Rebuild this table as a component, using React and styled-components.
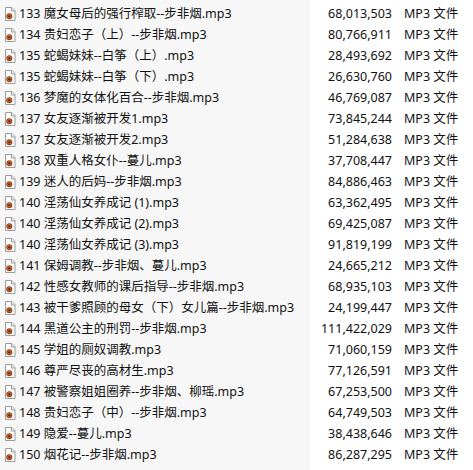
import React from 'react'
import styled, { createGlobalStyle } from 'styled-components'

const GlobalStyle = createGlobalStyle`
  html, body {
    margin: 0;
    padding: 0;
    background: #fff;
  }
  body {
    font-family: "Noto Sans", "Noto Sans CJK SC", sans-serif;
    color: #111;
  }
`

const files = [
    ['133 魔女母后的强行榨取--步非烟.mp3', '68,013,503'],
    ['134 贵妇恋子（上）--步非烟.mp3', '80,766,911'],
    ['135 蛇蝎妹妹--白筝（上）.mp3', '28,493,692'],
    ['135 蛇蝎妹妹--白筝（下）.mp3', '26,630,760'],
    ['136 梦魔的女体化百合--步非烟.mp3', '46,769,087'],
    ['137 女友逐渐被开发1.mp3', '73,845,244'],
    ['137 女友逐渐被开发2.mp3', '51,284,638'],
    ['138 双重人格女仆--蔓儿.mp3', '37,708,447'],
    ['139 迷人的后妈--步非烟.mp3', '84,886,463'],
    ['140 淫荡仙女养成记 (1).mp3', '63,362,495'],
    ['140 淫荡仙女养成记 (2).mp3', '69,425,087'],
    ['140 淫荡仙女养成记 (3).mp3', '91,819,199'],
    ['141 保姆调教--步非烟、蔓儿.mp3', '24,665,212'],
    ['142 性感女教师的课后指导--步非烟.mp3', '68,935,103'],
    ['143 被干爹照顾的母女（下）女儿篇--步非烟.mp3', '24,199,447'],
    ['144 黑道公主的刑罚--步非烟.mp3', '111,422,029'],
    ['145 学姐的厕奴调教.mp3', '71,060,159'],
    ['146 尊严尽丧的高材生.mp3', '77,126,591'],
    ['147 被警察姐姐圈养--步非烟、柳瑶.mp3', '67,253,500'],
    ['148 贵妇恋子（中）--步非烟.mp3', '64,749,503'],
    ['149 隐爱--蔓儿.mp3', '38,438,646'],
    ['150 烟花记--步非烟.mp3', '86,287,295'],
]

// the sorted "name" column is shaded light grey in Explorer
const List = styled.div`
  min-height: 470px;
  padding-top: 3px;
  background: linear-gradient(to right, #f7f7f7 310px, #fff 310px);
`

const Row = styled.div`
  display: grid;
  grid-template-columns: 310px 82px 1fr;
  height: 21px;
  align-items: center;
  font-size: 12.5px;
  line-height: 21px;
  white-space: nowrap;
`

const Name = styled.div`
  display: flex;
  align-items: center;
  gap: 1px;
  padding-left: 2px;
  overflow: hidden;
`

const Size = styled.div`
  text-align: right;
`

const Type = styled.div`
  padding-left: 12px;
`

const AudioIcon = () => (
    <svg width="16" height="16" viewBox="0 0 16 16">
        <path d="M3.5 1.5h6.5l3 3v10h-9.5z" fill="#fff" stroke="#9b9b9b" />
        <path d="M9.5 1.5v3.5h3.5" fill="#eee" stroke="#9b9b9b" />
        <circle cx="7.3" cy="10.2" r="3" fill="#8e3a17" />
        <circle cx="7.3" cy="10.2" r="2.1" fill="#d06a2a" />
        <circle cx="7.3" cy="10.2" r="1" fill="#3a1a0a" />
    </svg>
)

const App = () => {
    return <>
        <GlobalStyle />
        <List>
            {files.map(([name, size], i) => (
                <Row key={i}>
                    <Name>
                        <AudioIcon />
                        <span>{name}</span>
                    </Name>
                    <Size>{size}</Size>
                    <Type>MP3 文件</Type>
                </Row>
            ))}
        </List>
    </>
}

export default App
